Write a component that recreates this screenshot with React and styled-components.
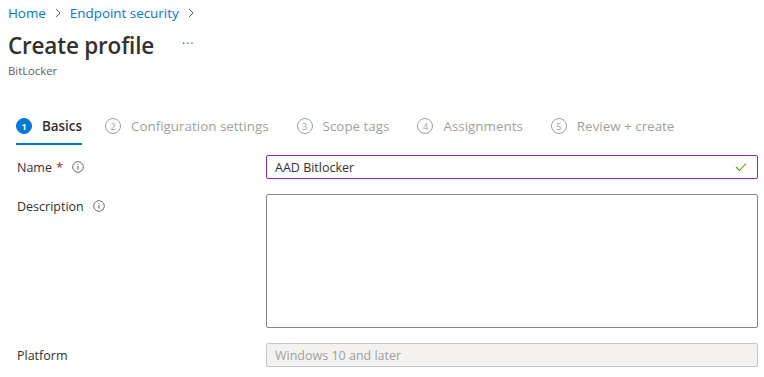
import styled, { createGlobalStyle } from "styled-components";

const GlobalStyle = createGlobalStyle`
  body {
    margin: 0;
    background: #fff;
    font-family: "Segoe UI", "Open Sans", sans-serif;
    color: #323130;
  }
`

const Page = styled.div`
  width: 764px;
  height: 377px;
  overflow: hidden;
`
const Header = styled.div`
  padding: 0 8px;
`
const Breadcrumb = styled.div`
  display: flex;
  align-items: center;
  height: 26px;
  font-size: 13.4px;
`
const Crumb = styled.a`
  color: #0078d4;
  text-decoration: none;
`
const Chevron = styled.span`
  display: flex;
  align-items: center;
  margin: 0 8px;
  color: #605e5c;
`
const TitleRow = styled.div`
  display: flex;
  align-items: center;
  height: 38px;
`
const Title = styled.h1`
  margin: 0;
  font-size: 22.5px;
  font-weight: 600;
  color: #323130;
  letter-spacing: -0.2px;
`
const More = styled.span`
  margin-left: 28px;
  font-size: 12px;
  color: #605e5c;
  letter-spacing: 1px;
  position: relative;
  top: -2px;
`
const Subtitle = styled.div`
  font-size: 11.3px;
  color: #605e5c;
  line-height: 14px;
`
const Steps = styled.div`
  display: flex;
  margin: 34px 0 0 16px;
`
const Step = styled.div`
  display: flex;
  align-items: center;
  height: 33px;
  margin-right: ${props => props.active ? '23px' : '28px'};
  border-bottom: 2px solid ${props => props.active ? '#0078d4' : 'transparent'};
  box-sizing: border-box;
  padding-bottom: 3px;
`
const StepNum = styled.span`
  width: 16px;
  height: 16px;
  box-sizing: border-box;
  border-radius: 50%;
  display: flex;
  align-items: center;
  justify-content: center;
  font-size: 9px;
  font-weight: ${props => props.active ? 700 : 400};
  background: ${props => props.active ? '#0078d4' : 'transparent'};
  color: ${props => props.active ? '#fff' : '#a19f9d'};
  border: 1px solid ${props => props.active ? '#0078d4' : '#a19f9d'};
`
const StepLabel = styled.span`
  margin-left: 10px;
  font-size: 13.4px;
  color: ${props => props.active ? '#323130' : '#a19f9d'};
  font-weight: ${props => props.active ? 600 : 400};
`
const Form = styled.div`
  padding: 10px 6px 0 17px;
  display: flex;
  flex-direction: column;
  gap: 15px;
`
const Row = styled.div`
  display: flex;
  align-items: flex-start;
`
const Label = styled.div`
  width: 249px;
  display: flex;
  align-items: center;
  height: 24px;
  font-size: 12.5px;
  color: #323130;
`
const Required = styled.span`
  color: #a4262c;
  margin-left: 4px;
  font-size: 13px;
`
const Info = styled.span`
  display: flex;
  margin-left: 9px;
`
const Field = styled.div`
  flex: 1;
  height: ${props => props.tall ? '134px' : '24px'};
  box-sizing: border-box;
  border: 1px solid ${props => props.focused ? '#8a2da5' : props.disabled ? '#c8c6c4' : '#8a8886'};
  border-radius: 2px;
  background: ${props => props.disabled ? '#f3f2f1' : '#fff'};
  display: flex;
  align-items: center;
  justify-content: space-between;
  padding: 0 10px 0 8px;
  font-size: 12.5px;
  color: ${props => props.disabled ? '#a19f9d' : '#323130'};
`

const InfoIcon = () => (
  <Info>
    <svg width="12" height="12" viewBox="0 0 12 12">
      <circle cx="6" cy="6" r="5.3" fill="none" stroke="#605e5c" strokeWidth="0.9" />
      <rect x="5.5" y="5" width="1" height="3.6" fill="#605e5c" />
      <rect x="5.5" y="3.2" width="1" height="1" fill="#605e5c" />
    </svg>
  </Info>
)

const ChevronIcon = () => (
  <Chevron>
    <svg width="8" height="10" viewBox="0 0 8 10">
      <path d="M2 1 L6 5 L2 9" fill="none" stroke="#605e5c" strokeWidth="1" />
    </svg>
  </Chevron>
)

const steps = ['Basics', 'Configuration settings', 'Scope tags', 'Assignments', 'Review + create']

const App = () => {
  return (
    <Page>
      <GlobalStyle />
      <Header>
        <Breadcrumb>
          <Crumb>Home</Crumb>
          <ChevronIcon />
          <Crumb>Endpoint security</Crumb>
          <ChevronIcon />
        </Breadcrumb>
        <TitleRow>
          <Title>Create profile</Title>
          <More>···</More>
        </TitleRow>
        <Subtitle>BitLocker</Subtitle>
      </Header>
      <Steps>
        {steps.map((s, i) => (
          <Step key={s} active={i === 0}>
            <StepNum active={i === 0}>{i + 1}</StepNum>
            <StepLabel active={i === 0}>{s}</StepLabel>
          </Step>
        ))}
      </Steps>
      <Form>
        <Row>
          <Label>Name<Required>*</Required><InfoIcon /></Label>
          <Field focused>
            <span>AAD Bitlocker</span>
            <svg width="12" height="10" viewBox="0 0 12 10">
              <path d="M1 5 L4.5 8.5 L11 1.5" fill="none" stroke="#57a300" strokeWidth="1.1" />
            </svg>
          </Field>
        </Row>
        <Row>
          <Label>Description<InfoIcon /></Label>
          <Field tall />
        </Row>
        <Row>
          <Label>Platform</Label>
          <Field disabled>Windows 10 and later</Field>
        </Row>
      </Form>
    </Page>
  );
};

export default App;
